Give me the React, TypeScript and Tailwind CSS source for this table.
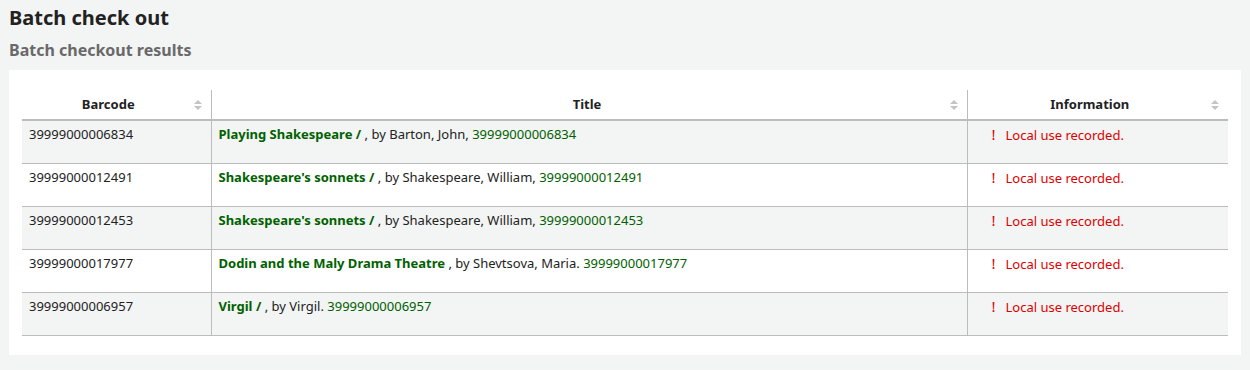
const rows = [
  { barcode: "39999000006834", title: "Playing Shakespeare /", by: ", by Barton, John,", code: "39999000006834" },
  { barcode: "39999000012491", title: "Shakespeare's sonnets /", by: ", by Shakespeare, William,", code: "39999000012491" },
  { barcode: "39999000012453", title: "Shakespeare's sonnets /", by: ", by Shakespeare, William,", code: "39999000012453" },
  { barcode: "39999000017977", title: "Dodin and the Maly Drama Theatre", by: ", by Shevtsova, Maria.", code: "39999000017977" },
  { barcode: "39999000006957", title: "Virgil /", by: ", by Virgil.", code: "39999000006957" },
];

const SortIcon = () => (
  <svg width="8" height="10" viewBox="0 0 8 10" className="absolute right-[9px] top-[10px]">
    <path d="M4 0 L8 4 L0 4 Z" fill="#c4c4c4" />
    <path d="M4 10 L8 6 L0 6 Z" fill="#c4c4c4" />
  </svg>
);

const App = () => {
  return (
    <div
      className="w-[1250px] h-[370px] bg-[#f3f4f4] px-[9px] pt-[6px] text-[#222]"
      style={{ fontFamily: '"Noto Sans", "Open Sans", sans-serif' }}
    >
      <h1 className="text-[20px] font-bold leading-[24px] text-[#222]">Batch check out</h1>
      <h3 className="mt-[8px] text-[16px] font-bold leading-[24px] text-[#696969]">
        Batch checkout results
      </h3>
      <div className="mt-[8px] bg-white px-[13px] pt-[20px] pb-[19px]">
        <table className="w-full border-collapse text-[13px]">
          <thead>
            <tr className="h-[30px] border-b-2 border-[#bcbcbc]">
              <th className="relative w-[189px] border-r border-[#bcbcbc] pl-2 pr-6 text-center font-bold">
                Barcode
                <SortIcon />
              </th>
              <th className="relative w-[756px] border-r border-[#bcbcbc] pl-2 pr-3 text-center font-bold">
                Title
                <SortIcon />
              </th>
              <th className="relative pl-2 pr-6 text-center font-bold">
                Information
                <SortIcon />
              </th>
            </tr>
          </thead>
          <tbody>
            {rows.map((r, i) => (
              <tr
                key={i}
                className={`h-[43px] border-b border-[#bcbcbc] align-top ${i % 2 === 0 ? "bg-[#f3f4f4]" : "bg-white"}`}
              >
                <td className="border-r border-[#bcbcbc] pl-[7px] pt-[4px] leading-[18px]">{r.barcode}</td>
                <td className="border-r border-[#bcbcbc] pl-[7px] pt-[4px] leading-[18px]">
                  <span className="font-bold text-[#006100]">{r.title}</span> {r.by}{" "}
                  <span className="text-[#006100]">{r.code}</span>
                </td>
                <td className="pl-[24px] pt-[4px] leading-[18px] text-[#dd0000]">
                  <span className="mr-[10px] inline-block w-[4px] text-[15px]">!</span>
                  Local use recorded.
                </td>
              </tr>
            ))}
          </tbody>
        </table>
      </div>
    </div>
  );
};

export default App;
